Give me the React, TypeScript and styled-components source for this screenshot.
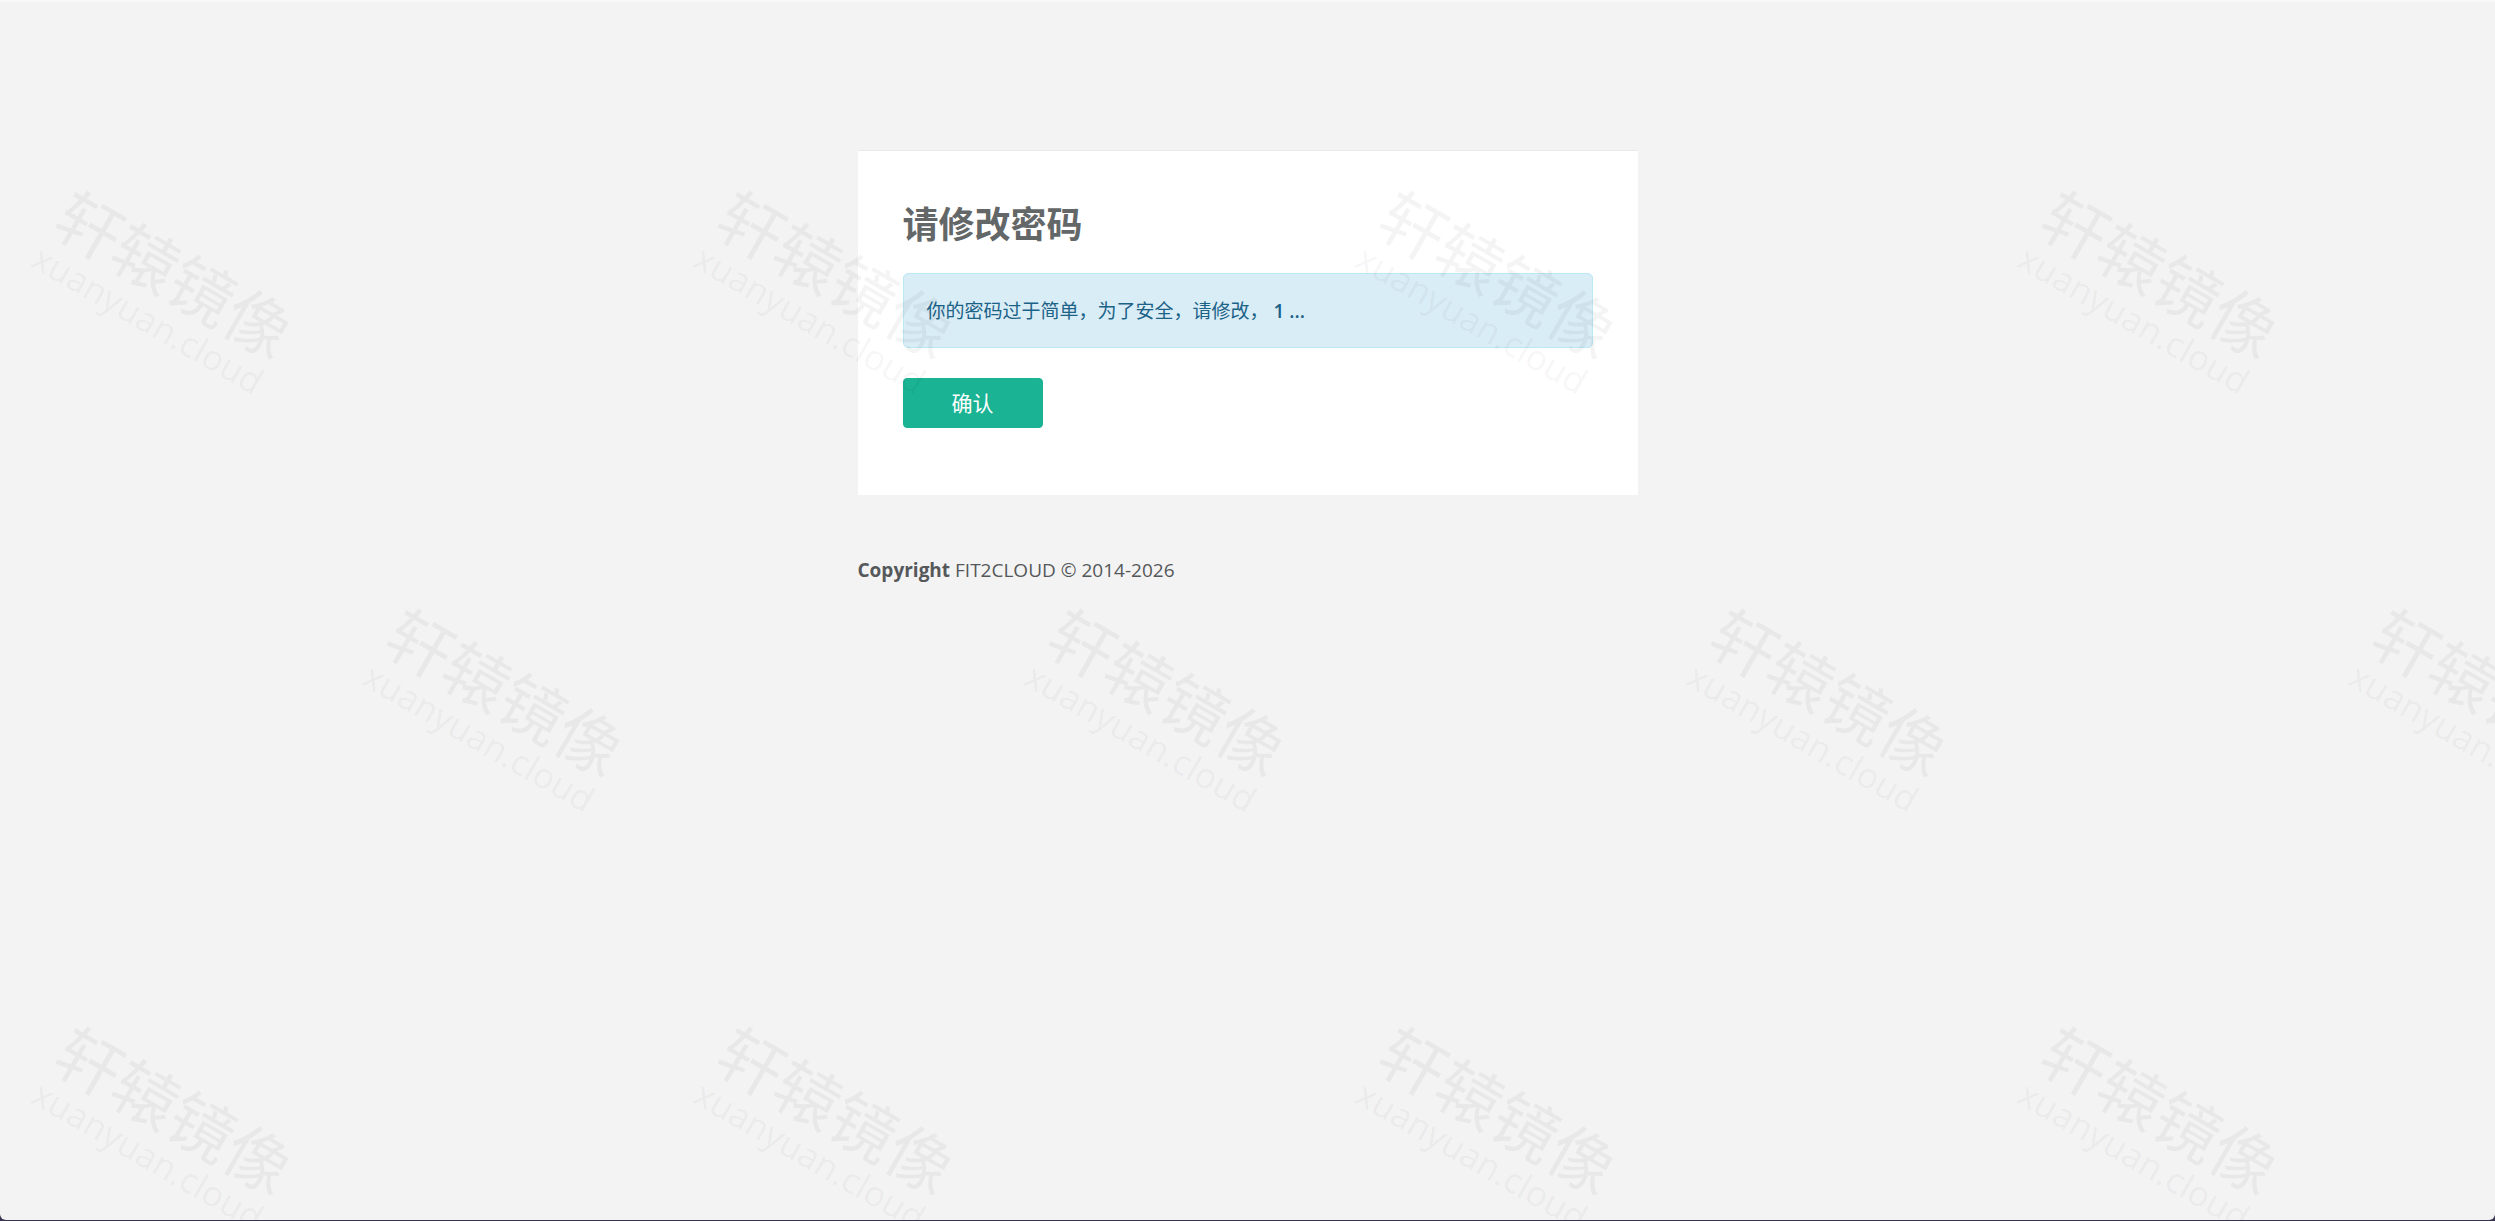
import React from "react";
import styled, { createGlobalStyle } from "styled-components";

const GlobalStyle = createGlobalStyle`
  * { box-sizing: border-box; }
  body {
    margin: 0;
    background: #37334f;
    color: #676a6c;
    font-family: "Open Sans", "Noto Sans CJK SC", sans-serif;
    font-size: 19px;
    line-height: 27px;
  }
`;

const Page = styled.div`
  position: relative;
  overflow: hidden;
  min-height: calc(100vh - 1px);
  padding: 148px 20px 60px;
  background: #f3f3f3;
  border-top: 2px solid #f9f9f9;
  border-radius: 0 0 6px 6px;
`;

const Column = styled.main`
  max-width: 780px;
  margin: 0 auto;
`;

const Card = styled.section`
  padding: 54px 45px 67px;
  background: #fff;
  border-top: 1px solid #e7eaec;
`;

const Title = styled.h2`
  margin: 0 0 28px;
  color: #636768;
  font-size: 36px;
  line-height: 40px;
  font-weight: 700;
`;

const Alert = styled.div`
  margin-bottom: 30px;
  padding: 24px 23px 22px;
  border: 1px solid #bce8f1;
  border-radius: 5px;
  background: #d9edf7;
  color: #1b6287;
`;

const Count = styled.span`
  font-weight: 600;
`;

const ConfirmButton = styled.button`
  display: block;
  height: 50px;
  padding: 0 48px;
  border: 1px solid #1ab394;
  border-radius: 4px;
  background: #1ab394;
  color: #fff;
  font: inherit;
  font-size: 21px;
  cursor: pointer;
`;

const Footer = styled.footer`
  margin-top: 62px;
  color: #55585a;

  strong {
    font-weight: 700;
  }
`;

const WatermarkLayer = styled.div`
  position: absolute;
  inset: 0;
  overflow: hidden;
  pointer-events: none;
`;

const WatermarkRow = styled.div<{ $shifted: boolean }>`
  display: flex;
  height: 418px;
  padding-left: ${(p) => (p.$shifted ? 331 : 0)}px;
`;

const WatermarkCell = styled.div`
  flex: 0 0 662px;
  padding: 236px 0 0 35px;
`;

const Mark = styled.div`
  width: 260px;
  text-align: center;
  transform: rotate(30deg);
`;

const MarkName = styled.div`
  color: rgba(0, 0, 0, 0.045);
  font-size: 65px;
  line-height: 68px;
`;

const MarkSite = styled.div`
  color: rgba(0, 0, 0, 0.05);
  font-size: 35px;
  line-height: 36px;
`;

const rows = [0, 1, 2];
const cells = [0, 1, 2, 3];

function Watermark() {
  return (
    <WatermarkLayer aria-hidden="true">
      {rows.map((row) => (
        <WatermarkRow key={row} $shifted={row % 2 === 1}>
          {cells.map((cell) => (
            <WatermarkCell key={cell}>
              <Mark>
                <MarkName>轩辕镜像</MarkName>
                <MarkSite>xuanyuan.cloud</MarkSite>
              </Mark>
            </WatermarkCell>
          ))}
        </WatermarkRow>
      ))}
    </WatermarkLayer>
  );
}

export default function App() {
  return (
    <>
      <GlobalStyle />
      <Page>
        <Column>
          <Card>
            <Title>请修改密码</Title>
            <Alert role="status">
              你的密码过于简单，为了安全，请修改， <Count>1 ...</Count>
            </Alert>
            <ConfirmButton type="button">确认</ConfirmButton>
          </Card>
          <Footer>
            <strong>Copyright</strong> FIT2CLOUD © 2014-2026
          </Footer>
        </Column>
        <Watermark />
      </Page>
    </>
  );
}
